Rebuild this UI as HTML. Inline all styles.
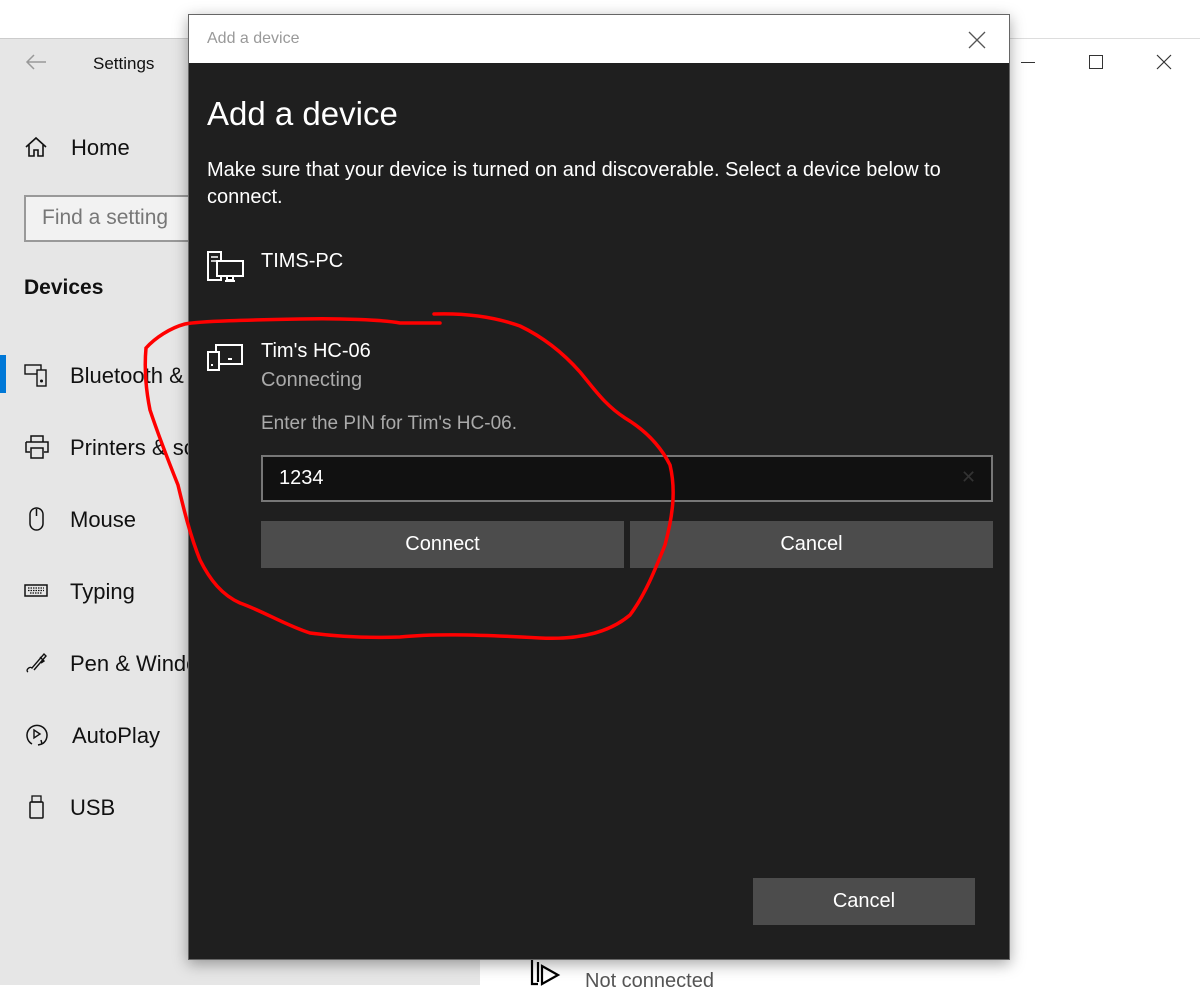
<!DOCTYPE html>
<html><head><meta charset="utf-8"><style>
*{margin:0;padding:0;box-sizing:border-box}
body{width:1200px;height:1000px;background:#fff;position:relative;overflow:hidden;font-family:"Liberation Sans",sans-serif}
.a{position:absolute;white-space:nowrap}
.side{position:absolute;left:0;top:38px;width:480px;height:947px;background:#e6e6e6}
.it{position:absolute;left:70px;font-size:22px;color:#111;transform:translateY(-50%)}
.ic{position:absolute;left:24px;transform:translateY(-50%)}
.dlg{position:absolute;left:188px;top:14px;width:822px;height:946px;background:#1f1f1f;box-shadow:0 4px 14px rgba(0,0,0,.35);border:1px solid #666}
.tb{position:absolute;left:0;top:0;width:100%;height:48px;background:#fff}
.w{color:#fff}
.btn{position:absolute;background:#4c4c4c;color:#fff;font-size:19px;display:flex;align-items:center;justify-content:center}
</style></head><body>
<div class="side"></div>
<div class="a" style="left:0;top:38px;width:188px;height:1px;background:#ccc"></div>
<div class="a" style="left:1010px;top:38px;width:190px;height:1px;background:#ddd"></div>
<svg class="a" style="left:24px;top:52px" width="24" height="20" viewBox="0 0 24 20"><path d="M22 10H3M10 3L3 10l7 7" stroke="#999" stroke-width="1.5" fill="none"/></svg>
<div class="a" style="left:93px;top:54px;font-size:17px;color:#111">Settings</div>
<svg class="ic" style="top:147px" width="24" height="24" viewBox="0 0 24 24"><path d="M2 12L12 3l10 9M5 10v11h5v-6h4v6h5V10" stroke="#111" stroke-width="1.6" fill="none"/></svg>
<div class="it" style="left:71px;top:148px">Home</div>
<div class="a" style="left:24px;top:195px;width:200px;height:47px;border:2px solid #999;background:#f2f2f2"></div>
<div class="a" style="left:42px;top:206px;font-size:21px;color:#777">Find a setting</div>
<div class="a" style="left:24px;top:276px;font-size:21px;font-weight:bold;color:#111">Devices</div>
<div class="a" style="left:0;top:355px;width:6px;height:38px;background:#0078d7"></div>
<svg class="ic" style="top:375px" width="26" height="26" viewBox="0 0 26 26"><rect x="1" y="3" width="16" height="9" stroke="#111" fill="none" stroke-width="1.4"/><rect x="13" y="8" width="9" height="16" stroke="#111" fill="#e6e6e6" stroke-width="1.4"/><circle cx="17.5" cy="19" r="1.5" fill="#111"/></svg>
<div class="it" style="top:376px">Bluetooth &amp; other devices</div>
<svg class="ic" style="top:447px" width="26" height="26" viewBox="0 0 26 26"><path d="M7 8V2h12v6M2 8h22v10h-4M6 18H2V8M7 14h12v10H7z" stroke="#111" fill="none" stroke-width="1.5"/></svg>
<div class="it" style="top:448px">Printers &amp; scanners</div>
<svg class="ic" style="top:519px" width="26" height="26" viewBox="0 0 26 26"><rect x="6" y="2" width="13" height="22" rx="6.5" stroke="#111" fill="none" stroke-width="1.5"/><path d="M12.5 3v7" stroke="#111" stroke-width="1.5"/></svg>
<div class="it" style="top:520px">Mouse</div>
<svg class="ic" style="top:591px" width="26" height="26" viewBox="0 0 26 26"><rect x="1" y="7" width="22" height="11" stroke="#111" fill="none" stroke-width="1.5"/><path d="M4 10h16M4 12.5h16M6 15h12" stroke="#111" stroke-dasharray="1.5 1" stroke-width="1.3"/></svg>
<div class="it" style="top:592px">Typing</div>
<svg class="ic" style="top:663px" width="26" height="26" viewBox="0 0 26 26"><path d="M4 22c-3-2 2-6 4-4l12-14 2 2-12 14M16 7l4 4-3 2" stroke="#111" fill="none" stroke-width="1.4"/></svg>
<div class="it" style="top:664px">Pen &amp; Windows Ink</div>
<svg class="ic" style="top:735px" width="26" height="26" viewBox="0 0 26 26"><path d="M8 22A10 10 0 1 1 18 22M18 22l-1-4M18 22l-4 1" stroke="#111" fill="none" stroke-width="1.5"/><path d="M10 8l6 4-6 4z" stroke="#111" fill="none" stroke-width="1.4"/></svg>
<div class="it" style="left:72px;top:736px">AutoPlay</div>
<svg class="ic" style="top:807px" width="26" height="26" viewBox="0 0 26 26"><rect x="6" y="8" width="13" height="16" rx="1" stroke="#111" fill="none" stroke-width="1.5"/><rect x="8" y="2" width="9" height="6" stroke="#111" fill="none" stroke-width="1.3"/></svg>
<div class="it" style="top:808px">USB</div>
<div class="a" style="left:1021px;top:62px;width:14px;height:1px;background:#333"></div>
<div class="a" style="left:1089px;top:55px;width:14px;height:14px;border:1px solid #333"></div>
<svg class="a" style="left:1156px;top:54px" width="16" height="16"><path d="M1 1l14 14M15 1L1 15" stroke="#333" stroke-width="1.2"/></svg>
<svg class="a" style="left:528px;top:958px" width="40" height="30" viewBox="0 0 40 30"><path d="M4 2v24h6M10 4v20M14 8l16 9-16 9z" stroke="#000" fill="none" stroke-width="2.2"/></svg>
<div class="a" style="left:585px;top:943px;font-size:20px;color:#333">Tim's media server 1234 P...</div>
<div class="a" style="left:585px;top:970px;font-size:20px;color:#555">Not connected</div>
<div class="a" style="left:0;top:988px;width:1200px;height:12px;background:#fff"></div>
<div class="dlg">
<div class="tb"></div>
<div class="a" style="left:18px;top:15px;font-size:16px;color:#999">Add a device</div>
<svg class="a" style="left:779px;top:16px" width="18" height="18"><path d="M1 1l16 16M17 1L1 17" stroke="#555" stroke-width="1.3"/></svg>
<div class="a w" style="left:18px;top:80px;font-size:33px">Add a device</div>
<div class="a w" style="left:18px;top:142px;font-size:20px;line-height:27px;white-space:normal;width:780px">Make sure that your device is turned on and discoverable. Select a device below to connect.</div>
<svg class="a" style="left:18px;top:236px" width="38" height="32" viewBox="0 0 38 32"><rect x="1" y="1" width="13" height="28" stroke="#fff" fill="none" stroke-width="2"/><path d="M4 6h7M4 10h7" stroke="#fff" stroke-width="1.5"/><rect x="10" y="10" width="26" height="15" stroke="#fff" fill="#1f1f1f" stroke-width="2"/><path d="M20 26v3h6v-3M18 30h10" stroke="#fff" stroke-width="2"/></svg>
<div class="a w" style="left:72px;top:235px;font-size:20px">TIMS-PC</div>
<svg class="a" style="left:18px;top:328px" width="38" height="30" viewBox="0 0 38 30"><rect x="9" y="2" width="26" height="19" stroke="#fff" fill="none" stroke-width="2"/><rect x="1" y="9" width="11" height="18" stroke="#fff" fill="#1f1f1f" stroke-width="2"/><rect x="4" y="21" width="2" height="2" fill="#fff"/><rect x="21" y="15" width="4" height="2" fill="#fff"/></svg>
<div class="a w" style="left:72px;top:325px;font-size:20px">Tim's HC-06</div>
<div class="a" style="left:72px;top:354px;font-size:20px;color:#aaa">Connecting</div>
<div class="a" style="left:72px;top:398px;font-size:19px;color:#aaa">Enter the PIN for Tim's HC-06.</div>
<div class="a" style="left:72px;top:440px;width:732px;height:47px;background:#111;border:2px solid #777"></div>
<div class="a w" style="left:90px;top:452px;font-size:20px">1234</div>
<div class="a" style="left:772px;top:452px;font-size:18px;color:#333">✕</div>
<div class="btn" style="left:72px;top:506px;width:363px;height:47px;font-size:20px">Connect</div>
<div class="btn" style="left:441px;top:506px;width:363px;height:47px;font-size:20px">Cancel</div>
<div class="btn" style="left:564px;top:863px;width:222px;height:47px;font-size:20px">Cancel</div>
</div>
<svg class="a" style="left:0;top:0" width="1200" height="1000"><path d="M440 323L400 323C385 320 340 318 300 319C250 320 200 321 185 324C170 328 155 338 146 348C144 370 146 390 150 410C160 440 170 465 178 485C184 510 190 535 200 560C210 580 222 595 240 603C265 612 285 625 310 633C340 637 370 638 400 637C430 634 470 634 540 638C580 640 610 632 630 615C645 595 655 570 665 545C673 515 676 490 670 465C660 445 645 430 625 418C605 405 595 390 580 372C565 355 545 338 520 326C495 317 465 313 434 314" stroke="#f00" stroke-width="3.5" fill="none" stroke-linecap="round"/></svg>
</body></html>
